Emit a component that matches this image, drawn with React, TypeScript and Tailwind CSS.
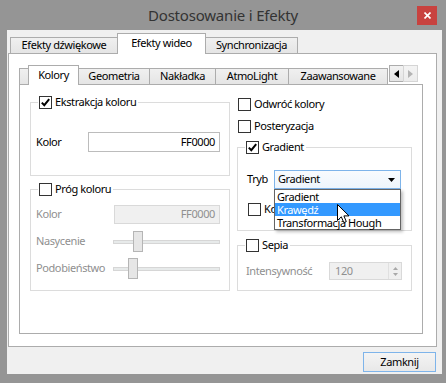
import React from "react";

function Check({ checked = false }: { checked?: boolean }) {
  return (
    <span className="w-[13px] h-[13px] shrink-0 border border-[#333333] bg-white flex items-center justify-center">
      {checked && (
        <svg width="11" height="11" viewBox="0 0 11 11">
          <path d="M1.8 5.6 L4.3 8.2 L9.2 2.2" fill="none" stroke="#000" strokeWidth="2" />
        </svg>
      )}
    </span>
  );
}

function Legend({ checked = false, children }: { checked?: boolean; children: React.ReactNode }) {
  return (
    <legend className="ml-[7px] px-[1px]">
      <span className="flex items-center gap-[3px] h-[15px] pr-[1px]">
        <Check checked={checked} />
        <span>{children}</span>
      </span>
    </legend>
  );
}

function OuterTab({ active = false, w, children }: { active?: boolean; w: string; children: React.ReactNode }) {
  return active ? (
    <div className={`${w} h-[21px] -mb-px -ml-px relative z-10 bg-white border border-b-0 border-[#acacac] flex items-center justify-center pb-[2px]`}>
      {children}
    </div>
  ) : (
    <div className={`${w} h-[16px] -ml-px first:ml-0 bg-gradient-to-b from-[#f0f0f0] to-[#e5e5e5] border border-b-0 border-[#acacac] flex items-center justify-center`}>
      {children}
    </div>
  );
}

function InnerTab({ active = false, w, children }: { active?: boolean; w: string; children?: React.ReactNode }) {
  return active ? (
    <div className={`${w} h-[20px] -mb-px -ml-px relative z-10 bg-white border border-b-0 border-[#acacac] flex items-center justify-center pb-[1px]`}>
      {children}
    </div>
  ) : (
    <div className={`${w} h-[16px] -ml-px first:ml-0 bg-gradient-to-b from-[#f0f0f0] to-[#e5e5e5] border border-b-0 border-[#acacac] flex items-center justify-center`}>
      {children}
    </div>
  );
}

function Slider({ pos }: { pos: number }) {
  return (
    <div className="relative w-[107px] h-[21px] flex items-center">
      <div className="w-full h-[4px] bg-[#e7eaea] border border-[#d6d6d6]" />
      <div
        className="absolute top-0 w-[10px] h-[21px] bg-[#e6e6e6] border border-[#b5b5b5]"
        style={{ left: pos }}
      />
    </div>
  );
}

export default function App() {
  return (
    <div className="relative w-[446px] h-[383px] bg-[#959595] flex flex-col font-['Noto_Sans',sans-serif] text-[11px] tracking-[-0.4px] text-black overflow-hidden select-none">
      {/* title bar */}
      <div className="h-[30px] relative flex items-center justify-center">
        <span className="text-[15px] text-[#333333] tracking-[-0.2px]">Dostosowanie i Efekty</span>
        <div className="absolute right-[9px] top-[6px] w-[20px] h-[19px] bg-[#c8423f] flex items-center justify-center">
          <svg width="7" height="7" viewBox="0 0 7 7">
            <path d="M0.5 0.5 L6.5 6.5 M6.5 0.5 L0.5 6.5" stroke="#fff" strokeWidth="1.6" />
          </svg>
        </div>
      </div>

      {/* client */}
      <div className="flex-1 ml-[7px] mr-[4px] mb-[9px] bg-[#f0f0f0] flex flex-col">
        <div className="h-[23px] flex items-end pl-[3px]">
          <OuterTab w="w-[108px]">Efekty dźwiękowe</OuterTab>
          <OuterTab active w="w-[89px]">Efekty wideo</OuterTab>
          <OuterTab w="w-[93px]">Synchronizacja</OuterTab>
        </div>

        <div className="h-[294px] ml-[1px] mr-[5px] bg-white border border-[#acacac] flex flex-col">
          <div className="mt-[10px] ml-[10px] mr-[13px] flex flex-col">
            {/* inner tab strip */}
            <div className="h-[20px] flex items-end">
              <InnerTab w="w-[10px] ml-[6px]" />
              <InnerTab active w="w-[51px]">Kolory</InnerTab>
              <InnerTab w="w-[72px]">Geometria</InnerTab>
              <InnerTab w="w-[67px]">Nakładka</InnerTab>
              <InnerTab w="w-[74px]">AtmoLight</InnerTab>
              <InnerTab w="w-[100px]">Zaawansowane</InnerTab>
              <div className="self-start mt-[1px] ml-[1px] flex">
                <div className="w-[15px] h-[17px] border border-[#acacac] bg-gradient-to-b from-[#f2f2f2] to-[#e5e5e5] flex items-center justify-center">
                  <svg width="5" height="8" viewBox="0 0 5 8">
                    <path d="M5 0 L0 4 L5 8 Z" fill="#000" />
                  </svg>
                </div>
                <div className="w-[15px] h-[17px] -ml-px border border-[#d5d5d5] bg-gradient-to-b from-[#f4f4f4] to-[#ececec] flex items-center justify-center">
                  <svg width="5" height="8" viewBox="0 0 5 8">
                    <path d="M0 0 L5 4 L0 8 Z" fill="#b4b4b4" />
                  </svg>
                </div>
              </div>
            </div>

            {/* inner panel */}
            <div className="h-[250px] bg-white border border-[#acacac] flex pl-[10px] gap-[7px]">
              {/* left column */}
              <div className="w-[200px] flex flex-col pt-[10px]">
                <fieldset className="border border-[#dcdcdc] pb-[23px]">
                  <Legend checked>Ekstrakcja koloru</Legend>
                  <div className="mt-[22px] h-[20px] flex items-center pl-[5px]">
                    <span className="w-[52px]">Kolor</span>
                    <div className="w-[132px] h-[20px] border border-[#bcbcbc] bg-white flex items-center justify-end pr-[4px]">
                      FF0000
                    </div>
                  </div>
                </fieldset>

                <fieldset className="mt-[6px] border border-[#dcdcdc] pb-[11px]">
                  <Legend>Próg koloru</Legend>
                  <div className="mt-[8px] h-[19px] flex items-center pl-[5px] text-[#8f8f8f]">
                    <span className="w-[78px]">Kolor</span>
                    <div className="w-[106px] h-[19px] border border-[#d9d9d9] bg-[#f0f0f0] flex items-center justify-end pr-[4px]">
                      FF0000
                    </div>
                  </div>
                  <div className="mt-[7px] h-[21px] flex items-center pl-[5px] text-[#8f8f8f]">
                    <span className="w-[77px]">Nasycenie</span>
                    <Slider pos={20} />
                  </div>
                  <div className="mt-[6px] h-[21px] flex items-center pl-[5px] text-[#8f8f8f]">
                    <span className="w-[77px]">Podobieństwo</span>
                    <Slider pos={15} />
                  </div>
                </fieldset>
              </div>

              {/* right column */}
              <div className="w-[175px] flex flex-col pt-[11px]">
                <div className="h-[16px] flex items-center gap-[3px] pl-[1px]">
                  <Check />
                  <span>Odwróć kolory</span>
                </div>
                <div className="mt-[6px] h-[16px] flex items-center gap-[3px] pl-[1px]">
                  <Check />
                  <span>Posteryzacja</span>
                </div>

                <fieldset className="mt-[6px] border border-[#dcdcdc] pb-[14px]">
                  <Legend checked>Gradient</Legend>
                  <div className="mt-[15px] h-[19px] flex items-center pl-[9px]">
                    <span className="w-[27px]">Tryb</span>
                    <div className="relative w-[127px] h-[19px]">
                      <div className="w-full h-full border border-[#7eb4ea] bg-gradient-to-b from-[#f8fbfe] to-[#eef5fc] flex items-center pl-[3px]">
                        <span className="flex-1">Gradient</span>
                        <svg width="7" height="4" viewBox="0 0 7 4" className="mr-[5px]">
                          <path d="M0 0 L7 0 L3.5 4 Z" fill="#000" />
                        </svg>
                      </div>
                      {/* dropdown list */}
                      <div className="absolute left-0 top-full w-[127px] z-20 bg-white border border-[#646464] shadow-[2px_2px_3px_rgba(0,0,0,0.25)] flex flex-col">
                        <div className="h-[13px] leading-[13px] pl-[2px]">Gradient</div>
                        <div className="h-[13px] leading-[13px] pl-[2px] bg-[#3399ff] text-white">Krawędź</div>
                        <div className="h-[13px] leading-[13px] pl-[2px]">Transformacja Hough</div>
                      </div>
                    </div>
                  </div>
                  <div className="mt-[14px] h-[13px] flex items-center gap-[3px] pl-[10px]">
                    <Check />
                    <span>Kolorowanie</span>
                  </div>
                </fieldset>

                <fieldset className="mt-[7px] border border-[#dcdcdc] pb-[10px]">
                  <Legend>Sepia</Legend>
                  <div className="mt-[9px] h-[18px] flex items-center pl-[8px] text-[#8f8f8f]">
                    <span className="w-[83px]">Intensywność</span>
                    <div className="w-[73px] h-[18px] border border-[#d9d9d9] bg-[#f0f0f0] flex items-center">
                      <span className="flex-1 pl-[5px]">120</span>
                      <div className="w-[13px] h-full flex flex-col items-center justify-center gap-[3px] border-l border-[#e0e0e0]">
                        <svg width="5" height="3" viewBox="0 0 5 3">
                          <path d="M0 3 L2.5 0 L5 3 Z" fill="#a8a8a8" />
                        </svg>
                        <svg width="5" height="3" viewBox="0 0 5 3">
                          <path d="M0 0 L5 0 L2.5 3 Z" fill="#a8a8a8" />
                        </svg>
                      </div>
                    </div>
                  </div>
                </fieldset>
              </div>
            </div>
          </div>
        </div>

        <div className="flex-1 flex items-start justify-end pt-[5px] pr-[6px]">
          <div className="w-[73px] h-[20px] border border-[#7eb4ea] bg-gradient-to-b from-[#f4f4f4] to-[#e8e8e8] flex items-center justify-center">
            Zamknij
          </div>
        </div>
      </div>

      {/* mouse cursor */}
      <svg className="absolute left-[337px] top-[204px] z-30" width="13" height="20" viewBox="0 0 13 20">
        <path d="M0.5 0.5 L0.5 16.5 L4.3 12.8 L6.8 18.6 L9.3 17.6 L6.9 11.9 L12 11.9 Z" fill="#fff" stroke="#000" strokeWidth="1" strokeLinejoin="miter" />
      </svg>
    </div>
  );
}
